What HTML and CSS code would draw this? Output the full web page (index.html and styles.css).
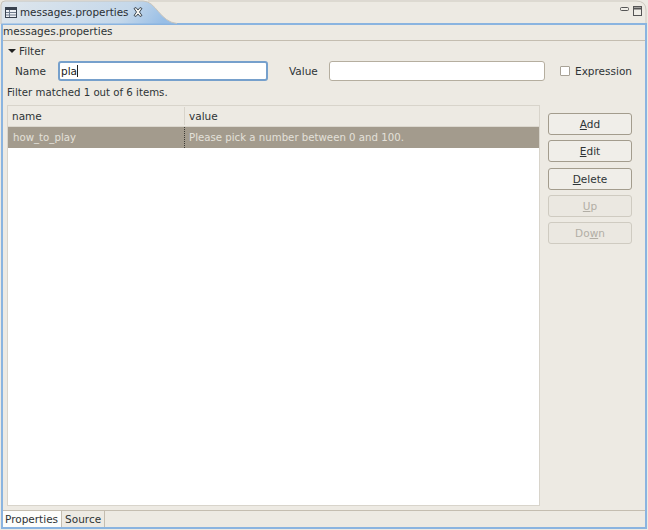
FILE: index.html
```html
<!DOCTYPE html>
<html>
<head>
<meta charset="utf-8">
<title>messages.properties</title>
<link rel="stylesheet" href="styles.css">
</head>
<body>
<div class="editor">
  <div class="tabbar">
    <div class="tab">
      <svg class="tab-curve" width="648" height="24" viewBox="0 0 648 24">
        <defs>
          <linearGradient id="tabfill" x1="0" y1="0" x2="1" y2="0.1">
            <stop offset="0" stop-color="#dfe6ec"/>
            <stop offset="0.75" stop-color="#c5d8ea"/>
            <stop offset="1" stop-color="#98bee6"/>
          </linearGradient>
        </defs>
        <path d="M1 24V5Q1 1 5 1H143C156 1 160 22 177 23.500H1Z" fill="url(#tabfill)"/>
        <path d="M1 24V5Q1 1 5 1H143C156 1 160 22 177 23.500" fill="none" stroke="#c9c5bc"/>
        <path d="M148 1H636Q646 1 646 10V23" fill="none" stroke="#cdc9c0"/>
      </svg>
      <svg class="icon" width="14" height="13" viewBox="0 0 14 13">
        <rect x="1.500" y="1.500" width="11" height="10" fill="#eef1f5" stroke="#39424f"/>
        <path d="M2 2.500h10M2 3.500h10" stroke="#39424f"/>
        <path d="M5.500 4v7M2 6.500h10M2 9h10" stroke="#6f7b8c"/>
      </svg>
      <span class="tab-label">messages.properties</span>
      <svg class="close" width="10" height="10" viewBox="0 0 10 10">
        <path d="M1 1.500l2-1L5 3l2-2.500 2 1L6.500 5 9 8.500l-2 1L5 7 3 9.500l-2-1L3.500 5Z" fill="#f4f3ef" stroke="#3e4a55" stroke-width="1"/>
      </svg>
    </div>
    <div class="win-buttons">
      <svg width="9" height="6" viewBox="0 0 9 6"><rect x="0.500" y="1.500" width="8" height="3" rx="1" fill="#efede7" stroke="#555"/></svg>
      <svg width="9" height="10" viewBox="0 0 9 10"><rect x="0.500" y="0.500" width="8" height="9" fill="#efede7" stroke="#555"/><path d="M1 2.500h7" stroke="#555" stroke-width="2"/></svg>
    </div>
  </div>
  <div class="frame">
    <div class="page-title">messages.properties</div>
    <div class="content">
      <div class="section"><span class="twisty"></span>Filter</div>
      <div class="filter-row">
        <label class="name-label">Name</label>
        <div class="field focused">pla<span class="caret"></span></div>
        <label class="value-label">Value</label>
        <div class="field value-field"></div>
        <span class="checkbox"></span>
        <label>Expression</label>
      </div>
      <div class="matched">Filter matched 1 out of 6 items.</div>
      <div class="main">
        <div class="table">
          <div class="thead">
            <div class="col-name">name</div>
            <div class="col-value">value</div>
          </div>
          <div class="row">
            <div class="col-name">how_to_play</div>
            <div class="col-value">Please pick a number between 0 and 100.</div>
          </div>
        </div>
        <div class="buttons">
          <button class="btn"><u>A</u>dd</button>
          <button class="btn"><u>E</u>dit</button>
          <button class="btn"><u>D</u>elete</button>
          <button class="btn disabled"><u>U</u>p</button>
          <button class="btn disabled">Do<u>w</u>n</button>
        </div>
      </div>
    </div>
    <div class="bottom-tabs">
      <div class="btab active">Properties</div>
      <div class="btab">Source</div>
    </div>
  </div>
</div>
</body>
</html>
```
FILE: styles.css
```css
* { box-sizing: border-box; }
html, body { margin: 0; padding: 0; }
body {
  width: 648px;
  height: 530px;
  background: #ffffff;
  font-family: "DejaVu Sans", sans-serif;
  font-size: 10.5px;
  color: #2e3436;
  overflow: hidden;
}
.editor { width: 648px; height: 530px; display: flex; flex-direction: column; background: #edeae3; }
.tabbar {
  height: 23px;
  display: flex;
  align-items: flex-start;
  justify-content: space-between;
  background: #edeae3;
  position: relative;
  flex: none;
}
.tab {
  display: flex;
  align-items: center;
  height: 23px;
  padding: 1px 0 0 4px;
}
.tab-curve { position: absolute; left: 0; top: 0; }
.icon { position: relative; margin-right: 1px; }
.tab-label { position: relative; color: #2a2e33; font-size: 10.4px; margin-left: 1px; }
.close { position: relative; margin-left: 5px; }
.win-buttons {
  position: relative;
  display: flex;
  align-items: flex-start;
  gap: 4px;
  padding: 6px 6px 0 0;
}
.frame {
  flex: 1;
  display: flex;
  flex-direction: column;
  border: 2px solid #8ab4e0;
  margin: 0 1px 1px 1px;
  min-height: 0;
}
.page-title {
  height: 16px;
  line-height: 13px;
  border-bottom: 1px solid #c4bdb0;
  flex: none;
  color: #2e3436;
}
.content { flex: 1; padding: 2px 7px 0 4px; display: flex; flex-direction: column; min-height: 0; }
.section { height: 15px; line-height: 14px; display: flex; align-items: center; padding-left: 1px; flex: none; }
.twisty {
  width: 0; height: 0;
  border-left: 4px solid transparent;
  border-right: 4px solid transparent;
  border-top: 4px solid #222;
  margin-right: 3px;
}
.filter-row { display: flex; align-items: center; height: 22px; margin-top: 2px; flex: none; }
.name-label { margin-left: 8px; width: 43px; }
.field {
  height: 20px;
  background: #fff;
  border: 1px solid #b5ae9f;
  border-radius: 3px;
  line-height: 18px;
  padding-left: 2px;
  color: #222;
}
.focused { width: 210px; border: 2px solid #76a0cc; line-height: 17px; padding-left: 1px; }
.caret { display: inline-block; width: 1px; height: 12px; background: #222; vertical-align: -2px; }
.value-label { margin-left: 21px; width: 40px; }
.value-field { width: 216px; }
.checkbox {
  width: 10px; height: 10px;
  margin-left: 15px; margin-right: 5px;
  background: #fff;
  border: 1px solid #a8a296;
  border-radius: 1px;
}
.matched { height: 14px; line-height: 14px; margin-top: 4px; flex: none; font-size: 10.2px; }
.main { flex: 1; display: flex; margin-top: 5px; min-height: 0; padding-bottom: 4px; }
.table {
  width: 533px;
  background: #fff;
  border: 1px solid #d8d4cb;
  flex: none;
  font-size: 10.2px;
}
.thead {
  display: flex;
  height: 21px;
  line-height: 21px;
  background: #edeae3;
  border-bottom: 1px solid #dcd8cf;
  font-size: 10.5px;
}
.thead .col-name { border-right: 1px solid #d8d4cb; height: 18px; margin-top: 1px; line-height: 18px; }
.col-name { width: 177px; padding-left: 4px; flex: none; }
.col-value { padding-left: 4px; }
.row {
  display: flex;
  height: 21px;
  line-height: 21px;
  background: #a39b8d;
  color: #e4e1da;
}
.row .col-name { padding-left: 5px; border-right: 1px dotted #3c3a34; }
.row .col-value { padding-left: 4px; }
.buttons {
  display: flex;
  flex-direction: column;
  gap: 5.25px;
  margin-left: 8px;
  padding-top: 8px;
}
.btn {
  width: 84px;
  height: 22px;
  padding: 0;
  background: #f0eee9;
  border: 1px solid #a39c8d;
  border-radius: 3px;
  font: inherit;
  color: #2e3436;
}
.disabled { color: #b2aea5; border-color: #cfcbc1; background: #ebe8e1; }
.bottom-tabs {
  height: 17px;
  flex: none;
  display: flex;
  border-top: 1px solid #c4bdb0;
}
.btab {
  padding: 1px 3px 0 3px;
  height: 16px;
  line-height: 14px;
  border-right: 1px solid #c4bdb0;
}
.active { background: #fdfdfb; padding: 1px 3px 0 2px; }
```
